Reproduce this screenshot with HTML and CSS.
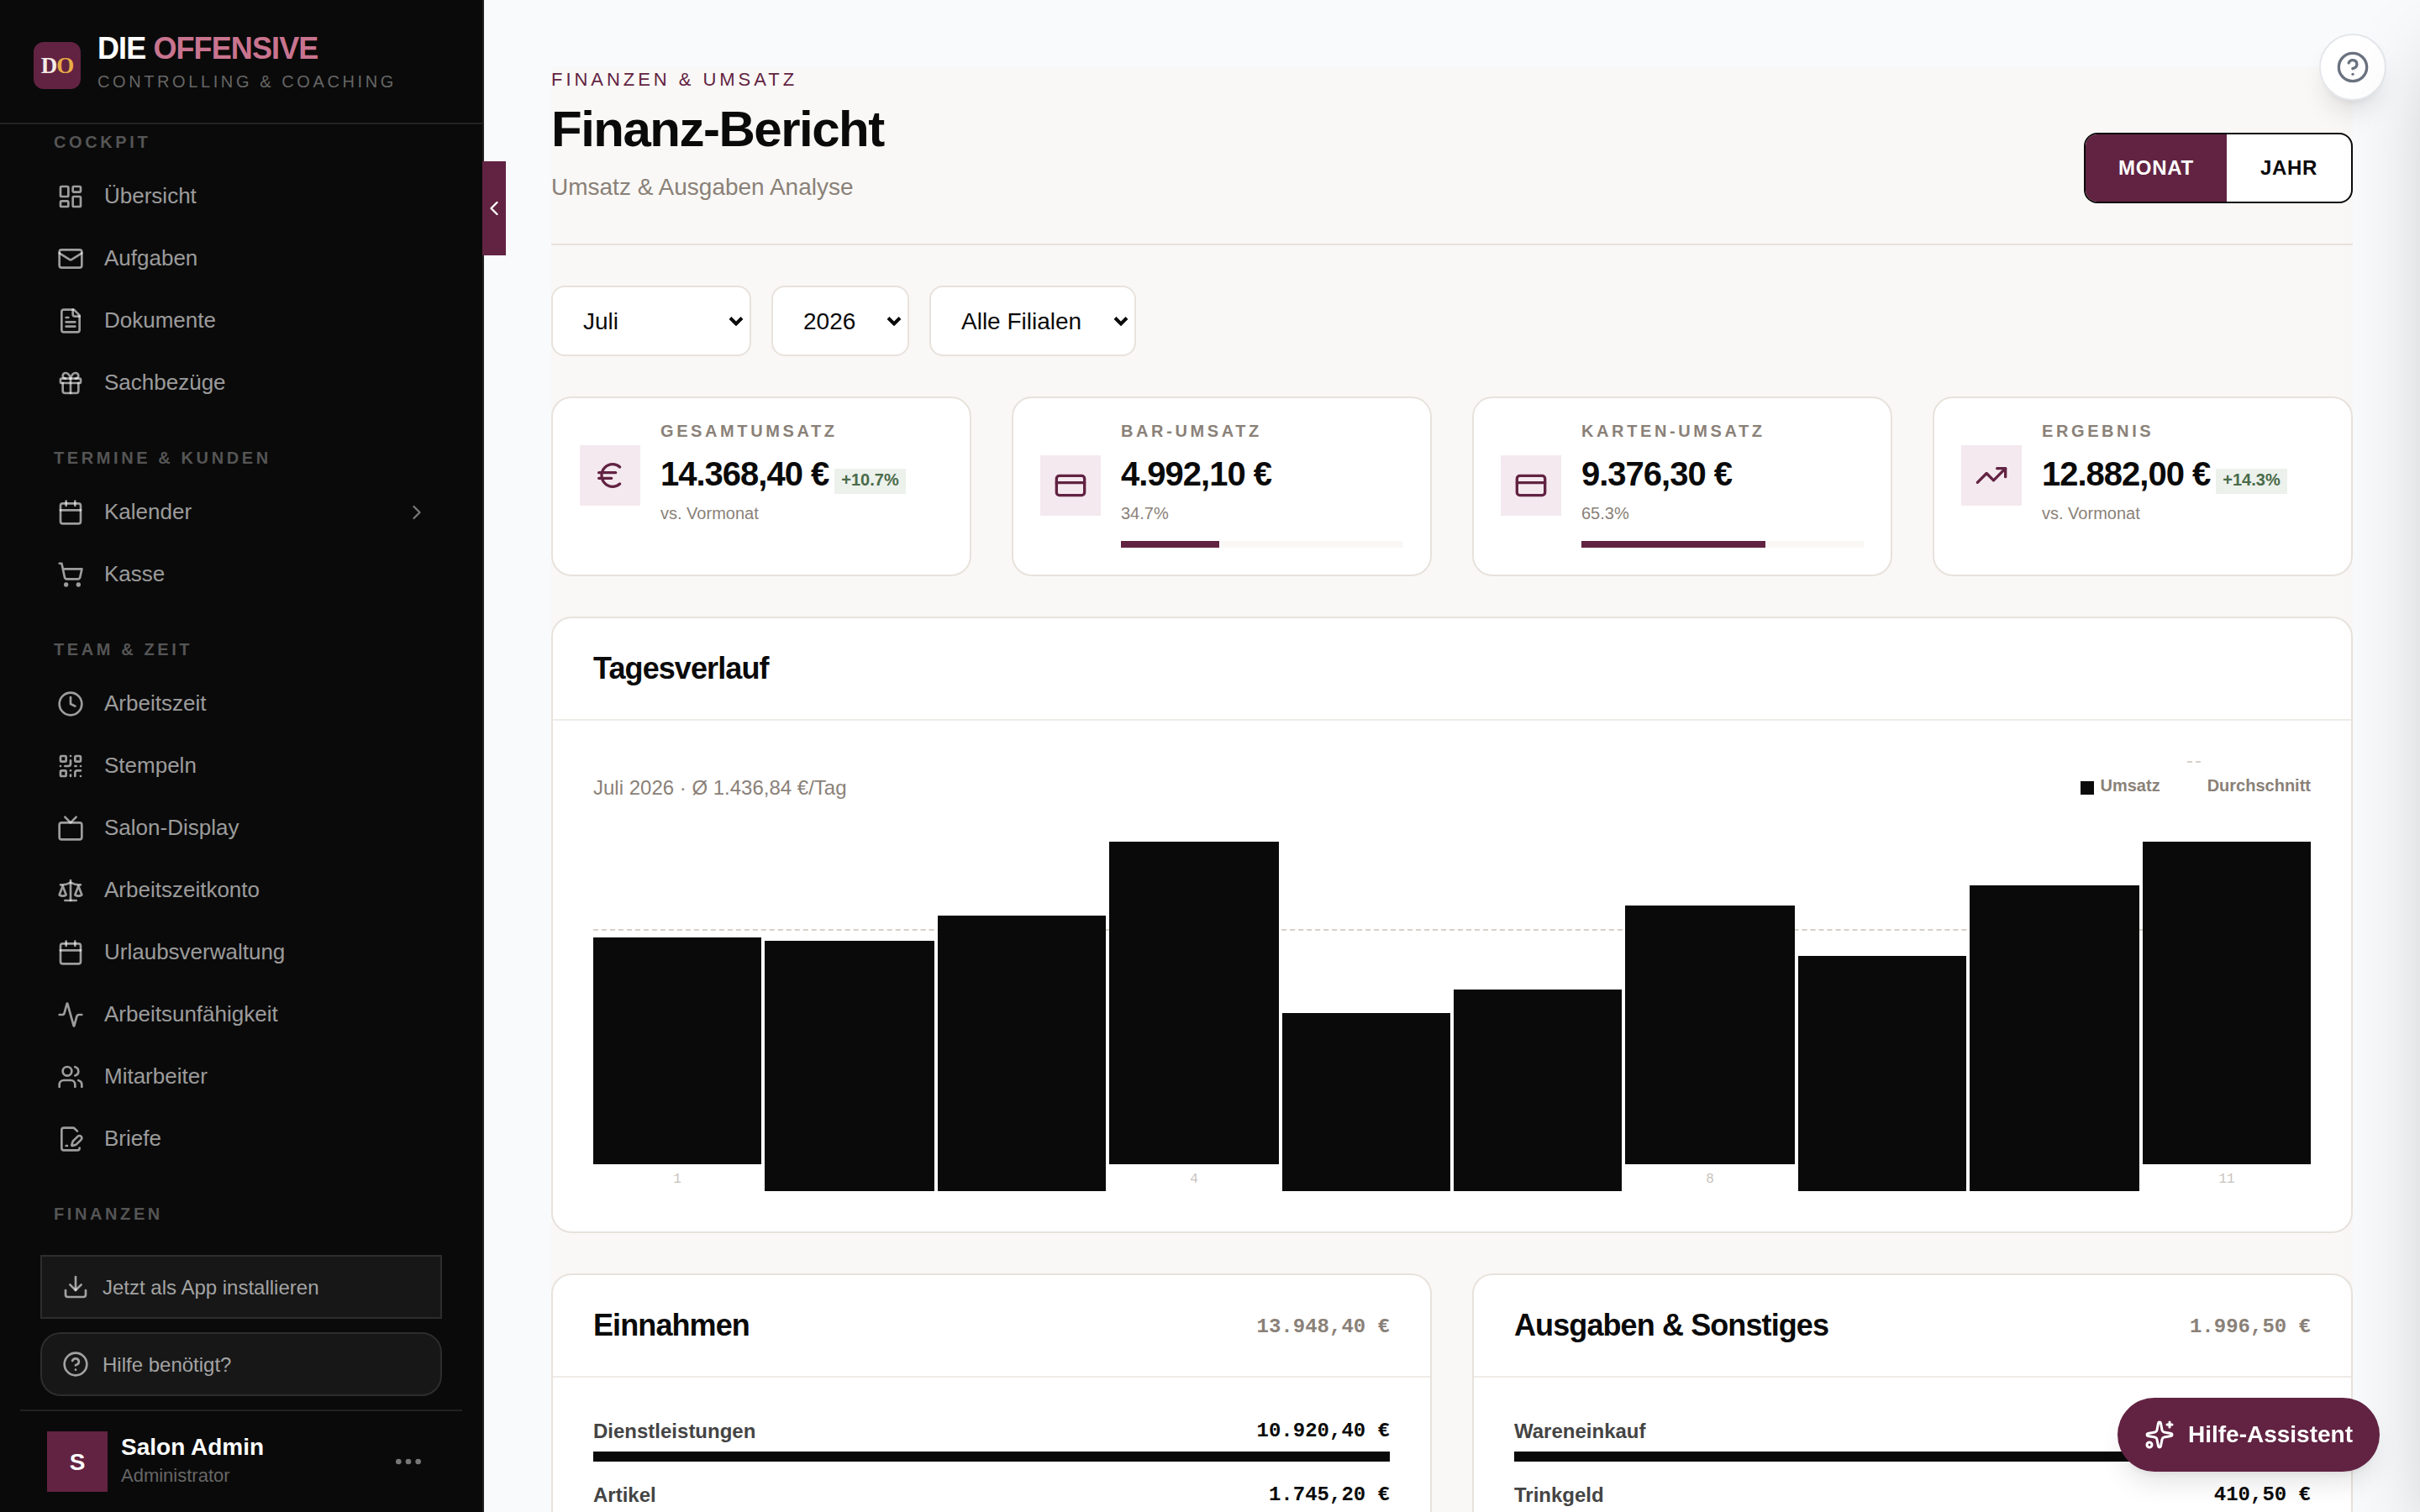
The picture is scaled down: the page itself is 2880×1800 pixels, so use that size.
FILE: index.html
```html
<!DOCTYPE html>
<html lang="de">
<head>
<meta charset="utf-8">
<title>Finanz-Bericht</title>
<link rel="stylesheet" href="styles.css">
</head>
<body>

<div class="app">

<!-- Sidebar -->
<aside class="sidebar">
    <div class="brand">
        <div class="logo"><span>D</span><span class="gold">O</span></div>
        <div>
            <div class="brand-name">DIE <span>OFFENSIVE</span></div>
            <div class="brand-sub">CONTROLLING &amp; COACHING</div>
        </div>
    </div>

    <nav class="nav">
        <h6>COCKPIT</h6>
        <a class="nav-item"><svg class="icon" viewBox="0 0 24 24"><rect x="3" y="3" width="7" height="9" rx="1"/><rect x="14" y="3" width="7" height="5" rx="1"/><rect x="14" y="12" width="7" height="9" rx="1"/><rect x="3" y="16" width="7" height="5" rx="1"/></svg><span>Übersicht</span></a>
        <a class="nav-item"><svg class="icon" viewBox="0 0 24 24"><rect x="2" y="4" width="20" height="16" rx="2"/><path d="m22 7-8.97 5.7a1.94 1.94 0 0 1-2.06 0L2 7"/></svg><span>Aufgaben</span></a>
        <a class="nav-item"><svg class="icon" viewBox="0 0 24 24"><path d="M15 2H6a2 2 0 0 0-2 2v16a2 2 0 0 0 2 2h12a2 2 0 0 0 2-2V7Z"/><path d="M14 2v4a2 2 0 0 0 2 2h4"/><path d="M10 9H8"/><path d="M16 13H8"/><path d="M16 17H8"/></svg><span>Dokumente</span></a>
        <a class="nav-item"><svg class="icon" viewBox="0 0 24 24"><rect x="3" y="8" width="18" height="4" rx="1"/><path d="M12 8v13"/><path d="M19 12v7a2 2 0 0 1-2 2H7a2 2 0 0 1-2-2v-7"/><path d="M7.5 8a2.5 2.5 0 0 1 0-5A4.8 8 0 0 1 12 8a4.8 8 0 0 1 4.5-5 2.5 2.5 0 0 1 0 5"/></svg><span>Sachbezüge</span></a>

        <h6>TERMINE &amp; KUNDEN</h6>
        <a class="nav-item"><svg class="icon" viewBox="0 0 24 24"><path d="M8 2v4"/><path d="M16 2v4"/><rect x="3" y="4" width="18" height="18" rx="2"/><path d="M3 10h18"/></svg><span>Kalender</span><svg class="icon chevron" viewBox="0 0 24 24"><path d="m9 18 6-6-6-6"/></svg></a>
        <a class="nav-item"><svg class="icon" viewBox="0 0 24 24"><circle cx="8" cy="21" r="1"/><circle cx="19" cy="21" r="1"/><path d="M2.05 2.05h2l2.66 12.42a2 2 0 0 0 2 1.58h9.78a2 2 0 0 0 1.95-1.57l1.65-7.43H5.12"/></svg><span>Kasse</span></a>

        <h6>TEAM &amp; ZEIT</h6>
        <a class="nav-item"><svg class="icon" viewBox="0 0 24 24"><circle cx="12" cy="12" r="10"/><path d="M12 6v6l4 2"/></svg><span>Arbeitszeit</span></a>
        <a class="nav-item"><svg class="icon" viewBox="0 0 24 24"><rect x="3" y="3" width="5" height="5" rx="1"/><rect x="16" y="3" width="5" height="5" rx="1"/><rect x="3" y="16" width="5" height="5" rx="1"/><path d="M21 16h-3a2 2 0 0 0-2 2v3"/><path d="M21 21v.01"/><path d="M12 7v3a2 2 0 0 1-2 2H7"/><path d="M3 12h.01"/><path d="M12 3h.01"/><path d="M12 16v.01"/><path d="M16 12h1"/><path d="M21 12v.01"/><path d="M12 21v-1"/></svg><span>Stempeln</span></a>
        <a class="nav-item"><svg class="icon" viewBox="0 0 24 24"><rect x="2" y="7" width="20" height="15" rx="2"/><path d="m17 2-5 5-5-5"/></svg><span>Salon-Display</span></a>
        <a class="nav-item"><svg class="icon" viewBox="0 0 24 24"><path d="m16 16 3-8 3 8c-.87.65-1.92 1-3 1s-2.13-.35-3-1Z"/><path d="m2 16 3-8 3 8c-.87.65-1.92 1-3 1s-2.13-.35-3-1Z"/><path d="M7 21h10"/><path d="M12 3v18"/><path d="M3 7h2c2 0 5-1 7-2 2 1 5 2 7 2h2"/></svg><span>Arbeitszeitkonto</span></a>
        <a class="nav-item"><svg class="icon" viewBox="0 0 24 24"><path d="M8 2v4"/><path d="M16 2v4"/><rect x="3" y="4" width="18" height="18" rx="2"/><path d="M3 10h18"/></svg><span>Urlaubsverwaltung</span></a>
        <a class="nav-item"><svg class="icon" viewBox="0 0 24 24"><path d="M22 12h-2.48a2 2 0 0 0-1.93 1.46l-2.35 8.36a.25.25 0 0 1-.48 0L9.24 2.18a.25.25 0 0 0-.48 0l-2.35 8.36A2 2 0 0 1 4.49 12H2"/></svg><span>Arbeitsunfähigkeit</span></a>
        <a class="nav-item"><svg class="icon" viewBox="0 0 24 24"><path d="M16 21v-2a4 4 0 0 0-4-4H6a4 4 0 0 0-4 4v2"/><circle cx="9" cy="7" r="4"/><path d="M22 21v-2a4 4 0 0 0-3-3.87"/><path d="M16 3.13a4 4 0 0 1 0 7.75"/></svg><span>Mitarbeiter</span></a>
        <a class="nav-item"><svg class="icon" viewBox="0 0 24 24"><path d="m18 5-2.414-2.414A2 2 0 0 0 14.172 2H6a2 2 0 0 0-2 2v16a2 2 0 0 0 2 2h12a2 2 0 0 0 2-2"/><path d="M21.378 12.626a1 1 0 0 0-3.004-3.004l-4.01 4.012a2 2 0 0 0-.506.854l-.837 2.87a.5.5 0 0 0 .62.62l2.87-.837a2 2 0 0 0 .854-.506z"/><path d="M8 18h1"/></svg><span>Briefe</span></a>

        <h6>FINANZEN</h6>
    </nav>

    <div class="side-foot">
        <button class="side-btn"><svg class="icon" viewBox="0 0 24 24"><path d="M21 15v4a2 2 0 0 1-2 2H5a2 2 0 0 1-2-2v-4"/><path d="m7 10 5 5 5-5"/><path d="M12 15V3"/></svg>Jetzt als App installieren</button>
        <button class="side-btn round"><svg class="icon" viewBox="0 0 24 24"><circle cx="12" cy="12" r="10"/><path d="M9.09 9a3 3 0 0 1 5.83 1c0 2-3 3-3 3"/><path d="M12 17h.01"/></svg>Hilfe benötigt?</button>
    </div>

    <div class="user">
        <div class="avatar">S</div>
        <div>
            <div class="user-name">Salon Admin</div>
            <div class="user-role">Administrator</div>
        </div>
        <svg class="icon dots" viewBox="0 0 24 24"><circle cx="5" cy="12" r="1"/><circle cx="12" cy="12" r="1"/><circle cx="19" cy="12" r="1"/></svg>
    </div>

    <button class="collapse"><svg class="icon" viewBox="0 0 24 24"><path d="m15 18-6-6 6-6"/></svg></button>
</aside>

<!-- Page -->
<main class="main">
<div class="page">

    <header class="page-head">
        <div>
            <div class="eyebrow">FINANZEN &amp; UMSATZ</div>
            <h1>Finanz-Bericht</h1>
            <p>Umsatz &amp; Ausgaben Analyse</p>
        </div>
        <div class="toggle">
            <button class="active">MONAT</button>
            <button>JAHR</button>
        </div>
    </header>

    <div class="filters">
        <button class="select month"><span>Juli</span><svg viewBox="0 0 18 12"><path d="M2 2.5 9 9.5 16 2.5"/></svg></button>
        <button class="select year"><span>2026</span><svg viewBox="0 0 18 12"><path d="M2 2.5 9 9.5 16 2.5"/></svg></button>
        <button class="select branch"><span>Alle Filialen</span><svg viewBox="0 0 18 12"><path d="M2 2.5 9 9.5 16 2.5"/></svg></button>
    </div>

    <section class="kpis">
        <div class="card kpi">
            <div class="kpi-icon"><svg class="icon" viewBox="0 0 24 24"><path d="M4 10h12"/><path d="M4 14h9"/><path d="M19 6a7.7 7.7 0 0 0-5.2-2A7.9 7.9 0 0 0 6 12c0 4.4 3.5 8 7.8 8 2 0 3.8-.8 5.2-2"/></svg></div>
            <div class="kpi-body">
                <div class="kpi-label">GESAMTUMSATZ</div>
                <div class="kpi-value">14.368,40 €<span class="badge">+10.7%</span></div>
                <div class="kpi-sub">vs. Vormonat</div>
            </div>
        </div>
        <div class="card kpi">
            <div class="kpi-icon"><svg class="icon" viewBox="0 0 24 24"><rect x="2" y="5" width="20" height="14" rx="2"/><path d="M2 10h20"/></svg></div>
            <div class="kpi-body">
                <div class="kpi-label">BAR-UMSATZ</div>
                <div class="kpi-value">4.992,10 €</div>
                <div class="kpi-sub">34.7%</div>
                <div class="share"><div style="width: 34.7%"></div></div>
            </div>
        </div>
        <div class="card kpi">
            <div class="kpi-icon"><svg class="icon" viewBox="0 0 24 24"><rect x="2" y="5" width="20" height="14" rx="2"/><path d="M2 10h20"/></svg></div>
            <div class="kpi-body">
                <div class="kpi-label">KARTEN-UMSATZ</div>
                <div class="kpi-value">9.376,30 €</div>
                <div class="kpi-sub">65.3%</div>
                <div class="share"><div style="width: 65.3%"></div></div>
            </div>
        </div>
        <div class="card kpi">
            <div class="kpi-icon"><svg class="icon" viewBox="0 0 24 24"><path d="M22 7l-8.5 8.5-5-5L2 17"/><path d="M16 7h6v6"/></svg></div>
            <div class="kpi-body">
                <div class="kpi-label">ERGEBNIS</div>
                <div class="kpi-value">12.882,00 €<span class="badge">+14.3%</span></div>
                <div class="kpi-sub">vs. Vormonat</div>
            </div>
        </div>
    </section>

    <section class="card panel">
        <div class="panel-head"><h2>Tagesverlauf</h2></div>
        <div class="chart-wrap">
            <div class="chart-head">
                <div class="chart-info">Juli 2026 · Ø 1.436,84 €/Tag</div>
                <div class="legend">
                    <span class="key"><i class="square"></i>Umsatz</span>
                    <span class="key"><i class="dash"></i>Durchschnitt</span>
                </div>
            </div>
            <div class="chart">
                <div class="average"></div>
                <div class="col"><div class="bar" style="height: 270px"></div><span>1</span></div>
                <div class="col"><div class="bar" style="height: 298px"></div></div>
                <div class="col"><div class="bar" style="height: 328px"></div></div>
                <div class="col"><div class="bar" style="height: 384px"></div><span>4</span></div>
                <div class="col"><div class="bar" style="height: 212px"></div></div>
                <div class="col"><div class="bar" style="height: 240px"></div></div>
                <div class="col"><div class="bar" style="height: 308px"></div><span>8</span></div>
                <div class="col"><div class="bar" style="height: 280px"></div></div>
                <div class="col"><div class="bar" style="height: 364px"></div></div>
                <div class="col"><div class="bar" style="height: 384px"></div><span>11</span></div>
            </div>
        </div>
    </section>

    <section class="split">
        <div class="card panel">
            <div class="panel-head"><h2>Einnahmen</h2><span class="sum">13.948,40 €</span></div>
            <div class="rows">
                <div class="row"><span>Dienstleistungen</span><b>10.920,40 €</b></div>
                <div class="track"><div style="width: 100%"></div></div>
                <div class="row"><span>Artikel</span><b>1.745,20 €</b></div>
            </div>
        </div>
        <div class="card panel">
            <div class="panel-head"><h2>Ausgaben &amp; Sonstiges</h2><span class="sum">1.996,50 €</span></div>
            <div class="rows">
                <div class="row"><span>Wareneinkauf</span></div>
                <div class="track"><div style="width: 100%"></div></div>
                <div class="row"><span>Trinkgeld</span><b>410,50 €</b></div>
            </div>
        </div>
    </section>

</div>
</main>
</div>

<!-- Floating elements -->
<button class="help"><svg class="icon" viewBox="0 0 24 24"><circle cx="12" cy="12" r="10"/><path d="M9.09 9a3 3 0 0 1 5.83 1c0 2-3 3-3 3"/><path d="M12 17h.01"/></svg></button>
<div class="drawer"></div>
<button class="assistant"><svg class="icon" viewBox="0 0 24 24"><path d="M11.017 2.814a1 1 0 0 1 1.966 0l1.051 5.558a2 2 0 0 0 1.594 1.594l5.558 1.051a1 1 0 0 1 0 1.966l-5.558 1.051a2 2 0 0 0-1.594 1.594l-1.051 5.558a1 1 0 0 1-1.966 0l-1.051-5.558a2 2 0 0 0-1.594-1.594l-5.558-1.051a1 1 0 0 1 0-1.966l5.558-1.051a2 2 0 0 0 1.594-1.594z"/><path d="M20 2v4"/><path d="M22 4h-4"/><circle cx="4" cy="20" r="2"/></svg>Hilfe-Assistent</button>

</body>
</html>
```
FILE: styles.css
```css
* {
    box-sizing: border-box;
    margin: 0;
    padding: 0;
}

body {
    height: 100vh;
    overflow: hidden;
    background: #f8fafc;
    color: #0a0a0a;
    font-family: "Liberation Sans", Arial, sans-serif;
    white-space: nowrap;
}

button {
    font-family: inherit;
    border: none;
    background: none;
    color: inherit;
}

.icon {
    display: block;
    flex: none;
    width: 32px;
    height: 32px;
    fill: none;
    stroke: currentColor;
    stroke-width: 2;
    stroke-linecap: round;
    stroke-linejoin: round;
}

.app {
    display: flex;
    height: 1800px;
}

/* ---------- Sidebar ---------- */
.sidebar {
    position: relative;
    display: flex;
    flex-direction: column;
    flex: none;
    width: 576px;
    background: #0a0a0a;
    border-right: 2px solid #222;
}

.brand {
    display: flex;
    flex: none;
    gap: 20px;
    height: 148px;
    padding: 37px 40px 0;
    border-bottom: 2px solid #222;
}

.logo {
    display: flex;
    align-items: center;
    justify-content: center;
    width: 56px;
    height: 56px;
    margin-top: 13px;
    border-radius: 12px;
    background: #622342;
    color: #f5ebe6;
    font: bold 27px/56px "Liberation Serif", serif;
    letter-spacing: -1px;
}

.logo .gold {
    color: #e8ac45;
}

.brand-name {
    color: #fff;
    font-size: 36px;
    font-weight: bold;
    line-height: 41px;
    letter-spacing: -0.025em;
}

.brand-name span {
    color: #c9748f;
}

.brand-sub {
    margin-top: 8px;
    color: #666;
    font-size: 20px;
    line-height: 22px;
    letter-spacing: 0.18em;
}

.nav {
    flex: 1;
    min-height: 0;
    overflow: hidden;
}

.nav h6 {
    padding: 41px 64px 17px;
    color: #555;
    font-size: 20px;
    line-height: 22px;
    letter-spacing: 0.18em;
}

.nav h6:first-child {
    padding-top: 10px;
}

.nav-item {
    display: flex;
    align-items: center;
    gap: 24px;
    height: 74px;
    padding: 0 64px 0 68px;
    color: rgba(255, 255, 255, 0.6);
    font-size: 26px;
    line-height: 30px;
}

.nav-item span {
    padding-bottom: 2px;
}

.nav-item .chevron {
    width: 28px;
    height: 28px;
    margin-left: auto;
    opacity: 0.75;
}

.side-foot {
    display: flex;
    flex-direction: column;
    gap: 16px;
    padding: 0 48px 16px;
}

.side-btn {
    display: flex;
    align-items: center;
    gap: 16px;
    height: 76px;
    padding: 0 24px;
    border: 2px solid #2d2d2d;
    background: #171717;
    color: #a3a3a3;
    font-size: 24px;
    line-height: 27px;
}

.side-btn.round {
    border-radius: 24px;
}

.side-btn .icon {
    stroke: rgba(255, 255, 255, 0.6);
}

.user {
    display: flex;
    align-items: center;
    gap: 16px;
    height: 122px;
    margin: 0 24px;
    padding: 0 44px 0 32px;
    border-top: 2px solid #222;
}

.avatar {
    width: 72px;
    height: 72px;
    background: #622342;
    color: #fff;
    font-size: 28px;
    font-weight: bold;
    line-height: 73px;
    text-align: center;
}

.user-name {
    color: #fff;
    font-size: 28px;
    font-weight: bold;
    line-height: 31px;
}

.user-role {
    margin: 6px 0 4px;
    color: #666;
    font-size: 22px;
    line-height: 25px;
}

.dots {
    width: 40px;
    height: 40px;
    margin-left: auto;
    color: #777;
}

/* tab that folds the sidebar away */
.collapse {
    position: absolute;
    top: 192px;
    right: -28px;
    display: flex;
    align-items: center;
    justify-content: center;
    width: 28px;
    height: 112px;
    background: #622342;
    color: #fff;
}

.collapse .icon {
    width: 28px;
    height: 28px;
}

/* ---------- Page ---------- */
.main {
    flex: 1;
    min-width: 0;
    padding: 80px 80px 0;
}

.page {
    display: flex;
    flex-direction: column;
    gap: 48px;
    height: 1720px;
    background: #f9f8f6;
    overflow: hidden;
}

.page > * {
    flex: none;
}

.page-head {
    display: flex;
    align-items: flex-end;
    justify-content: space-between;
    padding: 2px 0 48px;
    border-bottom: 2px solid #e8e2dc;
}

.eyebrow {
    color: #622342;
    font-size: 22px;
    line-height: 25px;
    letter-spacing: 0.18em;
}

h1 {
    margin-top: 13px;
    font-size: 60px;
    line-height: 67px;
    letter-spacing: -0.025em;
}

.page-head p {
    margin: 20px 0 4px;
    color: #8a8178;
    font-size: 28px;
    line-height: 31px;
}

.toggle {
    display: flex;
    height: 84px;
    border: 2px solid #0a0a0a;
    border-radius: 16px;
    background: #fff;
    overflow: hidden;
}

.toggle button {
    width: 148px;
    font-size: 24px;
    font-weight: bold;
    letter-spacing: 0.03em;
}

.toggle .active {
    width: 168px;
    background: #622342;
    color: #fff;
}

.filters {
    display: flex;
    gap: 24px;
}

.select {
    display: flex;
    align-items: center;
    justify-content: space-between;
    height: 84px;
    padding: 0 7px 0 36px;
    border: 2px solid #e8e2dc;
    border-radius: 16px;
    background: #fff;
    font-size: 28px;
}

.select span {
    padding-top: 2px;
}

.select svg {
    width: 18px;
    height: 12px;
    fill: none;
    stroke: #0a0a0a;
    stroke-width: 4;
}

.month { width: 238px; }
.year { width: 164px; }
.branch { width: 246px; }

.card {
    border: 2px solid #e8e2dc;
    border-radius: 24px;
    background: #fff;
}

.kpis {
    display: grid;
    grid-template-columns: repeat(4, 1fr);
    gap: 48px;
}

.kpi {
    display: flex;
    align-items: flex-start;
    gap: 24px;
    height: 214px;
    padding: 28px 32px 0;
}

.kpi-icon {
    display: flex;
    align-items: center;
    justify-content: center;
    flex: none;
    width: 72px;
    height: 72px;
    margin-top: 28px;
    background: #f4e9ef;
    color: #622342;
}

.kpi:has(.share) .kpi-icon {
    margin-top: 40px;
}

.kpi-icon .icon {
    width: 40px;
    height: 40px;
}

.kpi-body {
    flex: 1;
}

.kpi-label {
    color: #8a8178;
    font-size: 20px;
    font-weight: bold;
    line-height: 22px;
    letter-spacing: 0.18em;
}

.kpi-value {
    display: flex;
    align-items: baseline;
    gap: 7px;
    height: 44px;
    margin: 18px 0 14px;
    font-size: 40px;
    font-weight: bold;
    line-height: 44px;
    letter-spacing: -0.025em;
}

.badge {
    padding: 2px 8px 6px;
    background: #ecf1ec;
    color: #4a6b4a;
    font-size: 20px;
    line-height: 22px;
    letter-spacing: 0;
}

.kpi-sub {
    color: #8a8178;
    font-size: 20px;
    line-height: 22px;
}

.share {
    height: 8px;
    margin-top: 22px;
    background: #f9f8f6;
}

.share div {
    height: 100%;
    background: #622342;
}

.panel-head {
    display: flex;
    align-items: center;
    justify-content: space-between;
    height: 122px;
    padding: 0 48px;
    border-bottom: 2px solid #efece8;
}

h2 {
    padding-bottom: 1px;
    font-size: 36px;
    line-height: 41px;
    letter-spacing: -0.025em;
}

.sum {
    padding-top: 3px;
    color: #8a8178;
    font: bold 24px/27px "Liberation Mono", monospace;
}

.chart-wrap {
    padding: 48px;
}

.chart-head {
    display: flex;
    justify-content: space-between;
    height: 96px;
}

.chart-info {
    margin-top: 18px;
    color: #8a8178;
    font-size: 24px;
    line-height: 27px;
}

.legend {
    display: flex;
    gap: 32px;
    color: #8a8178;
    font-size: 20px;
    font-weight: bold;
    line-height: 22px;
}

.key {
    display: flex;
    gap: 8px;
    padding-top: 18px;
}

.square {
    width: 16px;
    height: 16px;
    margin-top: 6px;
    background: #0a0a0a;
}

.dash {
    width: 16px;
    margin-top: -18px;
    border-top: 2px dashed #d6d0ca;
}

.chart {
    position: relative;
    display: grid;
    grid-template-columns: 200px 202px 200px 202px 200px 200px 202px 200px 202px 200px;
    gap: 4px;
    height: 416px;
}

.average {
    position: absolute;
    top: 104px;
    left: 0;
    right: 0;
    border-top: 2px dashed #d6d0ca;
}

.col {
    position: relative;
    display: flex;
    flex-direction: column;
    justify-content: flex-end;
    text-align: center;
}

.bar {
    background: #0a0a0a;
}

.col span {
    height: 32px;
    padding-top: 8px;
    color: #c8c2bc;
    font: 16px/20px "Liberation Mono", monospace;
}

.split {
    display: grid;
    grid-template-columns: 1fr 1fr;
    gap: 48px;
}

.split .panel {
    height: 420px;
}

.rows {
    padding: 50px 48px 0;
}

.row {
    display: flex;
    justify-content: space-between;
    color: #444;
    font-size: 24px;
    font-weight: bold;
    line-height: 27px;
}

.row b {
    color: #0a0a0a;
    font-family: "Liberation Mono", monospace;
}

.track {
    height: 12px;
    margin: 11px 0 26px;
    background: #f9f8f6;
}

.track div {
    height: 100%;
    background: #0a0a0a;
}

/* ---------- Floating ---------- */
.help {
    position: fixed;
    top: 40px;
    right: 40px;
    display: flex;
    align-items: center;
    justify-content: center;
    width: 80px;
    height: 80px;
    border: 2px solid #e5e7eb;
    border-radius: 50%;
    background: #fff;
    color: #6b7280;
    box-shadow: 0 20px 30px -6px rgba(0, 0, 0, 0.1), 0 8px 12px -8px rgba(0, 0, 0, 0.1);
}

.help .icon {
    width: 40px;
    height: 40px;
}

/* closed drawer, parked past the right edge */
.drawer {
    position: fixed;
    top: 0;
    bottom: 0;
    left: 100%;
    width: 840px;
    background: #fff;
    box-shadow: 0 50px 100px -24px rgba(0, 0, 0, 0.25);
    pointer-events: none;
}

.assistant {
    position: fixed;
    right: 48px;
    bottom: 48px;
    display: flex;
    align-items: center;
    gap: 16px;
    height: 88px;
    padding: 0 32px;
    border-radius: 44px;
    background: #622342;
    color: #fff;
    font-size: 28px;
    font-weight: bold;
    box-shadow: 0 20px 30px -6px rgba(0, 0, 0, 0.1), 0 8px 12px -8px rgba(0, 0, 0, 0.1);
}

.assistant .icon {
    width: 36px;
    height: 36px;
}
```
